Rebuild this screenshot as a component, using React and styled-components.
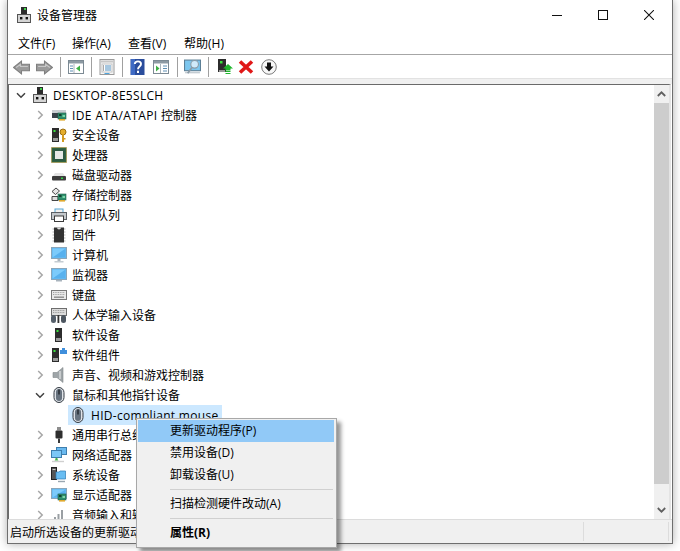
import React from 'react';
import styled, { createGlobalStyle } from 'styled-components';

const GlobalStyle = createGlobalStyle`
  html, body {
    margin: 0;
    padding: 0;
    background: #fff;
    overflow: hidden;
  }
  * { box-sizing: border-box; }
`;

const Page = styled.div`
  position: relative;
  width: 680px;
  height: 551px;
  padding: 0 7px 7px 7px;
  overflow: hidden;
  font-family: "Open Sans", "Noto Sans CJK SC", sans-serif;
  font-size: 12px;
  color: #000;
`;

const Win = styled.div`
  height: 544px;
  display: flex;
  flex-direction: column;
  background: #fff;
  border: 1px solid #6e6e6e;
  border-top: none;
  box-shadow: 0 0 9px rgba(0, 0, 0, 0.32);
`;

const TitleBar = styled.div`
  height: 30px;
  flex: none;
  display: flex;
  align-items: center;
  padding-left: 8px;
`;

const TitleText = styled.span`
  flex: 1;
  font-size: 12px;
  padding-bottom: 1px;
`;

const WinButton = styled.div`
  width: 46px;
  height: 30px;
  display: flex;
  align-items: center;
  justify-content: center;
`;

const MenuBar = styled.div`
  height: 25px;
  flex: none;
  display: flex;
  align-items: center;
  padding: 1px 0 0 10px;
  border-bottom: 1px solid #a6a6a6;
`;

const MenuLabel = styled.span`
  width: ${p => p.$w}px;
`;

const Toolbar = styled.div`
  height: 23px;
  flex: none;
  display: flex;
  align-items: center;
  padding: 1px 0 0 2px;
`;

const ToolButton = styled.div`
  width: ${p => p.$w || 23}px;
  height: 22px;
  display: flex;
  align-items: center;
  justify-content: center;
`;

const ToolSep = styled.div`
  width: 8px;
  height: 20px;
  display: flex;
  justify-content: center;
  &::after {
    content: '';
    width: 1px;
    background: #a0a0a0;
  }
`;

const Band = styled.div`
  height: 6px;
  flex: none;
  background: #f0f0f0;
  border-top: 1px solid #e2e2e2;
`;

const Body = styled.div`
  flex: 1;
  min-height: 0;
  display: flex;
  margin: 0 1px 0 0;
  border-top: 1px solid #6a6a6a;
  border-left: 1px solid #6a6a6a;
  border-right: 2px solid #e4e4e4;
`;

const Tree = styled.div`
  flex: 1;
  min-width: 0;
  overflow: hidden;
`;

const Row = styled.div`
  height: 20px;
  display: flex;
  align-items: center;
  padding-left: ${p => p.$indent}px;
  white-space: nowrap;
`;

const Chevron = styled.div`
  width: 18px;
  height: 20px;
  flex: none;
  display: flex;
  align-items: center;
  justify-content: center;
  padding-right: 4px;
`;

const RowIcon = styled.div`
  width: 16px;
  height: 16px;
  flex: none;
  margin-right: 5px;
`;

const Latin = styled.span`
  letter-spacing: ${p => p.$ls || 0.3}px;
`;

const Selected = styled.div`
  display: flex;
  align-items: center;
  height: 20px;
  width: 154px;
  padding-left: 2px;
  margin-left: -3px;
  background: #cce8ff;
`;

const Scrollbar = styled.div`
  width: 15px;
  flex: none;
  display: flex;
  flex-direction: column;
  background: #f0f0f0;
`;

const ScrollArrow = styled.div`
  height: 18px;
  flex: none;
  display: flex;
  align-items: center;
  justify-content: center;
`;

const ScrollThumb = styled.div`
  height: 381px;
  flex: none;
  background: #cdcdcd;
`;

const ScrollRest = styled.div`
  flex: 1;
`;

const StatusBar = styled.div`
  height: 24px;
  flex: none;
  display: flex;
  align-items: center;
  background: #f0f0f0;
  border-top: 1px solid #dcdcdc;
  padding-left: 2px;
`;

const StatusCell = styled.div`
  width: ${p => p.$w}px;
  height: 19px;
  flex: none;
  display: flex;
  align-items: center;
  border-right: 1px solid #dcdcdc;
`;

const ContextMenu = styled.div`
  position: absolute;
  left: 136px;
  top: 418px;
  width: 201px;
  height: 130px;
  padding: 1px;
  background: #f0f0f0;
  border: 1px solid #a8a8a8;
  box-shadow: 4px 4px 4px rgba(0, 0, 0, 0.42);
`;

const MenuItem = styled.div`
  height: 22px;
  width: 196px;
  display: flex;
  align-items: center;
  padding: 0 0 2px 32px;
  background: ${p => (p.$active ? '#91c9f7' : 'transparent')};
  font-weight: ${p => (p.$bold ? 700 : 400)};
`;

const MenuSep = styled.div`
  height: 1px;
  width: 163px;
  margin: 3px 0 3px 32px;
  background: #d0d0d0;
`;

const Svg = ({ children, s = 16 }) => (
  <svg width={s} height={s} viewBox="0 0 16 16" style={{ display: 'block' }}>{children}</svg>
);

const Tower = ({ x = 4 }) => (
  <g>
    <rect x={x} y="1" width="7" height="14" fill="#2c2c2c" />
    <rect x={x + 1} y="11" width="5" height="3" fill="#9a9a9a" />
    <rect x={x + 1.5} y="3" width="2" height="2" fill="#39e23c" />
  </g>
);

const Board = ({ x = 8, y = 8 }) => (
  <g>
    <rect x={x} y={y} width="8" height="6" fill="#2f8f6c" stroke="#1f5e4a" strokeWidth=".6" />
    <rect x={x + 1} y={y + 1} width="2.5" height="2" fill="#12402f" />
    <rect x={x + 4.5} y={y + 2} width="2.5" height="2" fill="#7bd6a8" />
    <rect x={x + 1} y={y + 6} width="6" height="1.6" fill="#e0a92e" />
  </g>
);

const Screen = ({ y = 2, h = 10 }) => (
  <g>
    <rect x=".5" y={y + 0.5} width="15" height={h} fill="#5db2ee" stroke="#8aa6ba" />
    <rect x="1.5" y={y + 1.5} width="13" height={h - 2} fill="#7ccbfb" />
    <path d={`M1.5 ${y + h - 0.5}L14.5 ${y + 1.5}V${y + h - 0.5}Z`} fill="#58b1ee" />
  </g>
);

const Mouse = () => (
  <Svg>
    <rect x="3" y=".5" width="10" height="15" rx="5" fill="#dfe3e8" stroke="#343b43" />
    <rect x="5" y="2" width="6" height="12" rx="3" fill="#68737f" />
    <rect x="7.3" y="2.5" width="1.4" height="5" fill="#22272d" />
  </Svg>
);

const icons = {
  root: (
    <Svg>
      <rect x="5" y="0" width="6" height="8" fill="#2c2c2c" />
      <rect x="8" y="1" width="2" height="2" fill="#3fd24a" />
      <rect x="1.5" y="7.5" width="13" height="8" fill="#d4d4d4" stroke="#555" />
      <rect x="4" y="10" width="2.4" height="2.4" fill="#111" />
      <rect x="9.6" y="10" width="2.4" height="2.4" fill="#111" />
    </Svg>
  ),
  ide: (
    <Svg>
      <path d="M1 3h14v3H1z" fill="#c9ced2" />
      <path d="M1 6h6v5H1z" fill="#39424a" />
      <Board x={7} y={6} />
    </Svg>
  ),
  security: (
    <Svg>
      <Tower x={1} />
      <circle cx="12" cy="5" r="3" fill="#e4ad2c" stroke="#9a6f12" />
      <rect x="11" y="7" width="2" height="8" fill="#d39b20" />
      <rect x="12.5" y="11" width="2" height="1.5" fill="#d39b20" />
    </Svg>
  ),
  cpu: (
    <Svg>
      <rect x=".5" y=".5" width="15" height="15" fill="#31633f" stroke="#b08a2c" strokeDasharray="1 1" />
      <rect x="2" y="2" width="12" height="12" fill="#2d5a43" />
      <rect x="4" y="4" width="8" height="8" fill="#e6e9e6" />
    </Svg>
  ),
  disk: (
    <Svg>
      <path d="M2 9L4 6h8l2 3z" fill="#e4e4e4" />
      <rect x="1" y="9" width="14" height="4.5" rx="1" fill="#3c3c3c" />
      <rect x="10" y="10.5" width="2" height="1.5" fill="#35d64a" />
    </Svg>
  ),
  storage: (
    <Svg>
      <path d="M1 4.5L5 1l3.5 3-4 3.5z" fill="#e6e6e6" stroke="#333" strokeWidth=".9" />
      <path d="M1 9.5h6v4H1z" fill="#dcdcdc" stroke="#333" strokeWidth=".9" />
      <Board x={7} y={7} />
    </Svg>
  ),
  printer: (
    <Svg>
      <rect x="4" y="2" width="8" height="4" fill="#f2f2f2" stroke="#56a7d6" />
      <rect x=".5" y="5.5" width="15" height="7" fill="#c3c8cc" stroke="#5b6065" />
      <rect x="3.5" y="9" width="9" height="5.5" fill="#fff" stroke="#3a3a3a" />
    </Svg>
  ),
  firmware: (
    <Svg>
      <path d="M1.5 2h13M1.5 5h13M1.5 8h13M1.5 11h13M1.5 14h13" stroke="#b5b5b5" strokeWidth="1.2" />
      <rect x="3" y=".5" width="10" height="15" fill="#333" />
      <path d="M6 .5a2 2 0 0 0 4 0z" fill="#ddd" />
    </Svg>
  ),
  computer: (
    <Svg>
      <Screen y={0} h={11} />
      <rect x="6.5" y="12" width="3" height="2" fill="#a9b4bd" />
      <rect x="3.5" y="14" width="9" height="1.5" fill="#c4ccd2" />
    </Svg>
  ),
  monitor: (
    <Svg>
      <Screen y={1} h={11} />
      <rect x="5" y="13" width="6" height="1.5" fill="#a9b4bd" />
    </Svg>
  ),
  keyboard: (
    <Svg>
      <rect x=".5" y="3.5" width="15" height="9" fill="#e9e9e9" stroke="#7a7a7a" />
      <path d="M2 5.5h12M2 7.5h12" stroke="#a2a2a2" strokeDasharray="1 .7" />
      <rect x="3" y="9.5" width="10" height="1.4" fill="#8c8c8c" />
    </Svg>
  ),
  hid: (
    <Svg>
      <rect x=".5" y="1.5" width="15" height="7" fill="#dcdcdc" stroke="#6d6d6d" />
      <path d="M2 3.5h12M2 5.5h12" stroke="#9c9c9c" strokeDasharray="1 .7" />
      <rect x="0" y="8" width="5" height="8" rx="2.5" fill="#56606b" />
      <rect x="10" y="8" width="5" height="8" rx="2.5" fill="#4d5660" />
      <rect x="6.5" y="8" width="1.8" height="8" fill="#333" />
    </Svg>
  ),
  software: (
    <Svg><Tower x={4} /></Svg>
  ),
  component: (
    <Svg>
      <Tower x={1} />
      <path d="M9 3h2V1h3v2h2v4H9z" fill="#3f8fdc" />
    </Svg>
  ),
  sound: (
    <Svg>
      <path d="M2 5.5h4L12 .5v15L6 10.5H2z" fill="#9fa5a8" stroke="#80868a" strokeWidth=".6" />
      <path d="M9 4v8" stroke="#d5d8da" strokeWidth="1.5" />
    </Svg>
  ),
  usb: (
    <Svg>
      <rect x="6" y="0" width="4" height="3.5" fill="#8e8e8e" />
      <rect x="4.5" y="3.5" width="7" height="8" rx="1" fill="#2e2e2e" />
      <rect x="7" y="11.5" width="2" height="4.5" fill="#3a3a3a" />
    </Svg>
  ),
  network: (
    <Svg>
      <rect x="5.5" y=".5" width="10" height="7" fill="#6ab9ef" stroke="#3f7fae" />
      <rect x=".5" y="3.5" width="10" height="7" fill="#7cc8f7" stroke="#3f7fae" />
      <path d="M5.5 11v2" stroke="#46b24c" strokeWidth="2" />
      <path d="M1 14.5h12" stroke="#cfcfcf" strokeWidth="1.4" />
      <path d="M3.5 13.5h4l-2-2z" fill="#46b24c" />
    </Svg>
  ),
  system: (
    <Svg>
      <rect x=".5" y=".5" width="5" height="12" fill="#555" stroke="#222" />
      <rect x="1.5" y="2" width="3" height="1" fill="#ccc" />
      <path d="M5 5h3l1-1h5.5v8H5z" fill="#69bdf2" stroke="#2f7bb5" strokeWidth=".7" />
      <path d="M7 14.5h7" stroke="#9aa7b1" strokeWidth="1.4" />
    </Svg>
  ),
  display: (
    <Svg>
      <Screen y={1} h={10} />
      <Board x={7} y={7} />
    </Svg>
  ),
  audioin: (
    <Svg>
      <path d="M3 15V10h2v5zM6.5 15V7h2v8zM10 15V3h2v12z" fill="#9a9fa3" />
    </Svg>
  ),
  mouse: <Mouse />,
};

const ArrowRight = () => (
  <svg width="7" height="10" viewBox="0 0 7 10" style={{ display: 'block' }}>
    <path d="M1.2 1l4 4-4 4" fill="none" stroke="#a6a6a6" strokeWidth="1.5" />
  </svg>
);

const ArrowDown = () => (
  <svg width="10" height="7" viewBox="0 0 10 7" style={{ display: 'block' }}>
    <path d="M1 1.2l4 4 4-4" fill="none" stroke="#404040" strokeWidth="1.5" />
  </svg>
);

const tools = [
  { w: 23, icon: <Svg s={17}><path d="M.5 8L8 2v3h7.5v6H8v3z" fill="#9b9b9b" stroke="#7f7f7f" /><path d="M3 8l4-3v2h7" fill="none" stroke="#c8c8c8" /></Svg> },
  { w: 23, icon: <Svg s={17}><path d="M15.5 8L8 2v3H.5v6H8v3z" fill="#9b9b9b" stroke="#7f7f7f" /><path d="M2 7h7V5l4 3" fill="none" stroke="#c8c8c8" /></Svg> },
  'sep',
  { w: 23, icon: <Svg s={16}><rect x=".5" y="1.5" width="15" height="13" fill="#fff" stroke="#7c8a94" /><rect x="1" y="2" width="14" height="2.5" fill="#8d9aa3" /><path d="M6 5v9" stroke="#a8b3ba" /><path d="M2 7h3M2 9.5h3M2 12h3" stroke="#5f8fb4" /><path d="M12 6.5v6L8 9.5z" fill="#3cb043" /></Svg> },
  'sep',
  { w: 23, icon: <Svg s={16}><rect x="1" y=".5" width="14" height="15" fill="#f6f6f6" stroke="#9a9a9a" /><rect x="2" y="1.5" width="12" height="2" fill="#c6c6c6" /><rect x="3" y="5" width="10" height="8" fill="#fff" stroke="#c4c4c4" /><path d="M6 7h6M6 9h6M6 11h6" stroke="#4f8fc0" /><path d="M4 7h1M4 9h1M4 11h1" stroke="#555" /><path d="M5.5 14.5h5" stroke="#4ea6e0" /></Svg> },
  'sep',
  { w: 23, icon: <Svg s={16}><rect x=".5" y="0" width="14" height="16" fill="#2a4d9c" /><rect x="1" y="0" width="4" height="16" fill="#3e6ac4" /><path d="M4.8 5C5 1.5 11 1.5 11 5c0 2.6-3 2.4-3 5.2" fill="none" stroke="#fff" strokeWidth="1.9" /><rect x="7" y="11.7" width="2" height="2.3" fill="#fff" /></Svg> },
  { w: 24, icon: <Svg s={16}><rect x=".5" y="1.5" width="15" height="13" fill="#fff" stroke="#7c8a94" /><rect x="1" y="2" width="14" height="2.5" fill="#8d9aa3" /><path d="M7.5 5v9" stroke="#a8b3ba" /><path d="M10 7h4M10 9.5h4M10 12h4" stroke="#5f8fb4" /><path d="M3 6.5v6l3.5-3z" fill="#3cb043" /></Svg> },
  'sep',
  { w: 23, icon: <Svg s={17}><rect x=".5" y="1" width="15" height="10" fill="#7cc6ee" stroke="#5c7f96" /><rect x="1" y="12" width="14" height="1.5" fill="#c4ccd2" /><circle cx="10" cy="5" r="3.6" fill="#cfeafa" stroke="#8a9aa5" /><path d="M7.5 8L3.5 13.5" stroke="#8a9aa5" strokeWidth="1.6" /></Svg> },
  'sep',
  { w: 25, icon: <Svg s={16}><rect x="1" y="0" width="8" height="13" fill="#2c2c2c" /><rect x="3" y="2" width="2.5" height="2.5" fill="#39e23c" /><rect x="2" y="11" width="6" height="2" fill="#9a9a9a" /><path d="M6 9.5L11 5l5 4.5h-2.5v2h-5v-2z" fill="#1fb52d" /><path d="M8.5 12.5h5M8.5 14.5h5" stroke="#1fb52d" strokeWidth="1.2" /></Svg> },
  { w: 17, icon: <Svg s={16}><path d="M2 2.5l12 11M14 2.5L2 13.5" stroke="#e01818" strokeWidth="3.6" /></Svg> },
  { w: 29, icon: <Svg s={16}><circle cx="8" cy="8" r="7.3" fill="#f7f7f7" stroke="#7a7a7a" /><path d="M6 3.5h4v4h2.5L8 12.5 3.5 7.5H6z" fill="#111" /></Svg> },
];

const devices = [
  ['ide', <><Latin $ls={0.4}>IDE ATA/ATAPI </Latin>控制器</>],
  ['security', '安全设备'],
  ['cpu', '处理器'],
  ['disk', '磁盘驱动器'],
  ['storage', '存储控制器'],
  ['printer', '打印队列'],
  ['firmware', '固件'],
  ['computer', '计算机'],
  ['monitor', '监视器'],
  ['keyboard', '键盘'],
  ['hid', '人体学输入设备'],
  ['software', '软件设备'],
  ['component', '软件组件'],
  ['sound', '声音、视频和游戏控制器'],
];

const devicesAfter = [
  ['usb', '通用串行总线控制器'],
  ['network', '网络适配器'],
  ['system', '系统设备'],
  ['display', '显示适配器'],
  ['audioin', '音频输入和输出'],
];

function DeviceRow({ kind, label }) {
  return (
    <Row $indent={24}>
      <Chevron><ArrowRight /></Chevron>
      <RowIcon>{icons[kind]}</RowIcon>
      <span>{label}</span>
    </Row>
  );
}

export default function App() {
  return (
    <Page>
      <GlobalStyle />
      <Win>
        <TitleBar>
          <RowIcon>{icons.root}</RowIcon>
          <TitleText>设备管理器</TitleText>
          <WinButton>
            <svg width="10" height="10" viewBox="0 0 10 10"><path d="M0 5.5h10" stroke="#111" /></svg>
          </WinButton>
          <WinButton>
            <svg width="10" height="10" viewBox="0 0 10 10"><rect x=".5" y=".5" width="9" height="9" fill="none" stroke="#111" /></svg>
          </WinButton>
          <WinButton>
            <svg width="10" height="10" viewBox="0 0 10 10"><path d="M0 0l10 10M10 0L0 10" stroke="#111" strokeWidth="1.05" /></svg>
          </WinButton>
        </TitleBar>
        <MenuBar>
          <MenuLabel $w={54}>文件(F)</MenuLabel>
          <MenuLabel $w={56}>操作(A)</MenuLabel>
          <MenuLabel $w={56}>查看(V)</MenuLabel>
          <MenuLabel $w={56}>帮助(H)</MenuLabel>
        </MenuBar>
        <Toolbar>
          {tools.map((t, i) =>
            t === 'sep' ? <ToolSep key={i} /> : <ToolButton key={i} $w={t.w}>{t.icon}</ToolButton>
          )}
        </Toolbar>
        <Band />
        <Body>
          <Tree>
            <Row $indent={5}>
              <Chevron><ArrowDown /></Chevron>
              <RowIcon>{icons.root}</RowIcon>
              <Latin>DESKTOP-8E5SLCH</Latin>
            </Row>
            {devices.map(([kind, label]) => <DeviceRow key={kind} kind={kind} label={label} />)}
            <Row $indent={24}>
              <Chevron><ArrowDown /></Chevron>
              <RowIcon>{icons.mouse}</RowIcon>
              <span>鼠标和其他指针设备</span>
            </Row>
            <Row $indent={62}>
              <Selected>
                <RowIcon>{icons.mouse}</RowIcon>
                <Latin>HID-compliant mouse</Latin>
              </Selected>
            </Row>
            {devicesAfter.map(([kind, label]) => <DeviceRow key={kind} kind={kind} label={label} />)}
          </Tree>
          <Scrollbar>
            <ScrollArrow>
              <svg width="9" height="6" viewBox="0 0 9 6"><path d="M.8 5l3.7-3.7L8.2 5" fill="none" stroke="#606060" strokeWidth="1.8" /></svg>
            </ScrollArrow>
            <ScrollThumb />
            <ScrollRest />
            <ScrollArrow>
              <svg width="9" height="6" viewBox="0 0 9 6"><path d="M.8 1l3.7 3.7L8.2 1" fill="none" stroke="#606060" strokeWidth="1.8" /></svg>
            </ScrollArrow>
          </Scrollbar>
        </Body>
        <StatusBar>
          <StatusCell $w={574}>启动所选设备的更新驱动程序</StatusCell>
          <StatusCell $w={85} />
        </StatusBar>
      </Win>
      <ContextMenu>
        <MenuItem $active>更新驱动程序(P)</MenuItem>
        <MenuItem>禁用设备(D)</MenuItem>
        <MenuItem>卸载设备(U)</MenuItem>
        <MenuSep />
        <MenuItem>扫描检测硬件改动(A)</MenuItem>
        <MenuSep />
        <MenuItem $bold>属性(R)</MenuItem>
      </ContextMenu>
    </Page>
  );
}
